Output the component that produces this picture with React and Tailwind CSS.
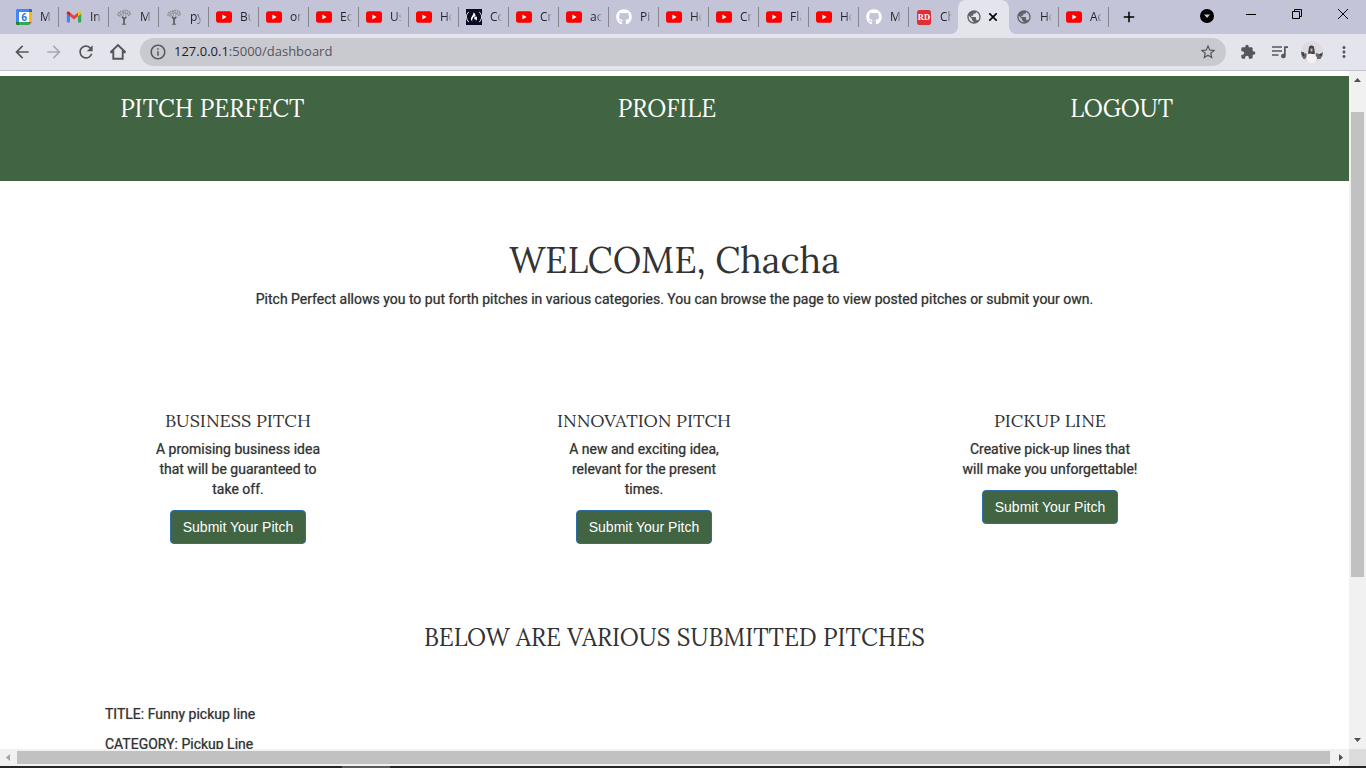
import React from "react";
import {
  MdArrowBack, MdArrowForward, MdRefresh, MdInfoOutline, MdStarBorder,
  MdExtension, MdMoreVert, MdPublic, MdAdd,
} from "react-icons/md";
import { FaGithub, FaFreeCodeCamp } from "react-icons/fa";

function YouTubeIcon() {
  return (
    <svg viewBox="0 0 16 16" className="size-4" aria-hidden="true">
      <rect x="0" y="2.3" width="16" height="11.4" rx="2.8" fill="#ff0000" />
      <path d="M6.4 5.6 10.5 8l-4.1 2.4z" fill="#fff" />
    </svg>
  );
}

function CalendarIcon() {
  return (
    <svg viewBox="0 0 16 16" className="size-4" aria-hidden="true">
      <path d="M1.3 0h11.7v3H3v10H0V1.3A1.3 1.3 0 0 1 1.3 0z" fill="#4285f4" />
      <path d="M13 0h1.7A1.3 1.3 0 0 1 16 1.3V3h-3z" fill="#1967d2" />
      <path d="M13 3h3v10h-3z" fill="#fbbc04" />
      <path d="M3 13h10v3H3z" fill="#34a853" />
      <path d="M0 13h3v3H1.3A1.3 1.3 0 0 1 0 14.7z" fill="#188038" />
      <path d="M13 13h3l-3 3z" fill="#ea4335" />
      <path d="M3 3h10v10H3z" fill="#fff" />
      <text x="8" y="11.500" textAnchor="middle" fontSize="10" fontWeight="700" fontFamily="Roboto, sans-serif" fill="#1a73e8">6</text>
    </svg>
  );
}

function GmailIcon() {
  return (
    <svg viewBox="0 0 16 16" className="size-4" aria-hidden="true">
      <path d="M1.800 13.5h2.2V7.200L.8 4.500v7.900A1.100 1.100 0 0 0 1.800 13.500z" fill="#4285f4" />
      <path d="M12 13.500h2.200a1.100 1.100 0 0 0 1-1.100V4.500L12 7.200z" fill="#34a853" />
      <path d="M12 3.600v3.600l3.200-2.700V4c0-1.500-1.400-1.900-2.300-1.200z" fill="#fbbc04" />
      <path d="M4 7.200V3.600L8 6.700l4-3.100v3.600L8 10.400z" fill="#ea4335" />
      <path d="M.8 4v.5L4 7.200V3.600l-.9-.8C2.200 2.100.8 2.500.8 4z" fill="#c5221f" />
    </svg>
  );
}

function TreeIcon() {
  return (
    <svg viewBox="0 0 16 16" className="size-4" aria-hidden="true">
      <g fill="none" stroke="#8d8d90" strokeWidth="1.800" strokeDasharray="1.400 0.800">
        <path d="M2 6.500C2 5 3 3 5 2.500S10 .8 12 2s2.300 3 2.200 4.500" />
        <path d="M3.500 7.500C4 6 5 4.500 7 4s4.500 0 6 3" />
        <path d="M4.500 5.500 7.500 8M7.500 2v5M11 3.500 9 7" strokeWidth="1" />
      </g>
      <path d="M8 15.500V9M8 10 6 7.800M8.200 10 10.300 7.800" stroke="#55555a" strokeWidth="1.600" fill="none" />
      <path d="M6 15.300h4.200" stroke="#68686d" strokeWidth="0.900" />
    </svg>
  );
}

function RdIcon() {
  return (
    <svg viewBox="0 0 16 16" className="size-4" aria-hidden="true">
      <rect x="1" y="1" width="14" height="15" rx="2.500" fill="#df2f36" />
      <text x="8" y="11.300" textAnchor="middle" fontSize="8.500" fontWeight="700" fontFamily="Liberation Serif, serif" fill="#fff">RD</text>
    </svg>
  );
}

function CodeCampIcon() {
  return (
    <span className="flex size-4 items-center justify-center bg-[#0a0a23] text-white">
      <FaFreeCodeCamp className="size-4" />
    </span>
  );
}

const ICONS = {
  calendar: <CalendarIcon />,
  gmail: <GmailIcon />,
  tree: <TreeIcon />,
  youtube: <YouTubeIcon />,
  camp: <CodeCampIcon />,
  github: <FaGithub className="size-4 text-white" />,
  rd: <RdIcon />,
  globe: <MdPublic className="size-4 text-[#5f6368]" />,
};

const TABS = [
  ["calendar", "M"], ["gmail", "In"], ["tree", "M"], ["tree", "py"], ["youtube", "Bu"],
  ["youtube", "or"], ["youtube", "Ec"], ["youtube", "Us"], ["youtube", "Ho"], ["camp", "Co"],
  ["youtube", "Cr"], ["youtube", "ac"], ["github", "Pi"], ["youtube", "Ho"], ["youtube", "Cr"],
  ["youtube", "Fla"], ["youtube", "Ho"], ["github", "M"], ["rd", "Ch"],
];

function Tab({ icon, label, divider = true }) {
  return (
    <button
      role="tab"
      aria-selected="false"
      className={`flex h-5 w-[50px] shrink-0 items-center gap-2 overflow-hidden border-r pl-[7px] ${divider ? "border-[#85858f]" : "border-transparent"}`}
    >
      <span className="shrink-0">{icon}</span>
      <span className="w-3 shrink-0 overflow-hidden text-left text-xs whitespace-nowrap text-[#25252b] [mask-image:linear-gradient(to_right,black_50%,transparent)]">
        {label}
      </span>
    </button>
  );
}

function TabStrip() {
  return (
    <header className="flex h-[34px] shrink-0 bg-[#c4c4d8]">
      <div role="tablist" className="flex items-center pl-[9px]">
        {TABS.map(([icon, label], i) => (
          <Tab key={i} icon={ICONS[icon]} label={label} divider={i < TABS.length - 1} />
        ))}
        <div
          role="tab"
          aria-selected="true"
          className="relative -ml-px flex h-full w-[51px] shrink-0 items-center gap-[3px] rounded-t-lg bg-[#e4e4ed] pl-2 before:absolute before:bottom-0 before:-left-2 before:size-2 before:bg-[radial-gradient(circle_at_top_left,transparent_8px,#e4e4ed_8px)] after:absolute after:-right-2 after:bottom-0 after:size-2 after:bg-[radial-gradient(circle_at_top_right,transparent_8px,#e4e4ed_8px)]"
        >
          {ICONS.globe}
          <button aria-label="Close tab" className="flex size-4 items-center justify-center">
            <svg viewBox="0 0 8 8" className="size-2" stroke="#000" strokeWidth="1.700"><path d="M.3.3l7.400 7.400M7.700.3.3 7.700" /></svg>
          </button>
        </div>
        <Tab icon={ICONS.globe} label="Ho" />
        <Tab icon={ICONS.youtube} label="Ac" />
      </div>
      <button aria-label="New tab" className="flex w-10 items-center justify-center text-black">
        <MdAdd className="size-[18px]" />
      </button>
      <div className="ml-auto flex h-8 text-black">
        <button aria-label="Search tabs" className="flex w-[42px] items-center justify-center">
          <svg viewBox="0 0 14 14" className="size-[14px]"><circle cx="7" cy="7" r="7" /><path d="M4 5.500h6L7 9z" fill="#c4c4d8" /></svg>
        </button>
        <button aria-label="Minimize" className="flex w-[46px] items-center justify-center pb-1">
          <svg viewBox="0 0 10 10" className="size-[10px]"><path d="M0 5.500h10" stroke="#000" /></svg>
        </button>
        <button aria-label="Restore" className="flex w-[46px] items-center justify-center pb-1">
          <svg viewBox="0 0 10 10" className="size-[10px]" fill="none" stroke="#000"><path d="M.5 2.500h7v7h-7zM2.500 2.500v-2h7v7h-2" /></svg>
        </button>
        <button aria-label="Close" className="flex w-[46px] items-center justify-center pb-1">
          <svg viewBox="0 0 10 10" className="size-[10px]" stroke="#000"><path d="M0 0l10 10M10 0 0 10" /></svg>
        </button>
      </div>
    </header>
  );
}

function ToolButton({ label, children }) {
  return (
    <button aria-label={label} className="flex h-8 w-8 shrink-0 items-center justify-center text-[#55565c]">
      {children}
    </button>
  );
}

function HomeIcon() {
  return (
    <svg viewBox="0 0 20 20" className="size-5" fill="none" stroke="currentColor" strokeWidth="1.900">
      <path d="M2.600 10.200 10 3l7.400 7.200M5.300 8.500v8.300h9.400V8.500M2.300 10.200h3M14.700 10.200h3" />
    </svg>
  );
}

function PlaylistIcon() {
  return (
    <svg viewBox="0 0 20 20" className="size-5">
      <path d="M2 5h10M2 9h10M2 13h6.500" fill="none" stroke="currentColor" strokeWidth="1.600" />
      <path d="M14 4.200h4v1.700h-2.300V14a2.300 2.300 0 1 1-1.700-2.200z" fill="currentColor" />
    </svg>
  );
}

function Avatar() {
  return (
    <svg viewBox="0 0 22 22" className="size-[22px]">
      <clipPath id="avatar"><circle cx="11" cy="11" r="11" /></clipPath>
      <g clipPath="url(#avatar)">
        <path d="M0 0h22v22H0z" fill="#dedade" />
        <path d="M0 10.500c1.500 0 2 1.500 3 2l2-.5 1 3-2 3H0zM15 12l2 .5 1.500 1L22 11v7h-6l-1.500-2z" fill="#6a686d" />
        <path d="M1 11h1.500l1 4H2zM17.500 14l3-2v3z" fill="#353338" />
        <path d="M8 6c1-2 4-2 5 0l1 6.500-3 1.500-4-1.500z" fill="#454348" />
        <path d="M9.500 7.500h2v3h-2z" fill="#c6b9ba" />
        <path d="M5.500 14.500l3.500-2 4.500 1 2.500 3-2 6H7z" fill="#f4f2f4" />
      </g>
    </svg>
  );
}

function Toolbar() {
  return (
    <div className="flex h-[37px] shrink-0 items-center border-b border-[#c3c3cb] bg-[#e4e4ed] pl-[6px]">
      <ToolButton label="Back"><MdArrowBack className="size-5" /></ToolButton>
      <ToolButton label="Forward"><MdArrowForward className="size-5 text-[#a9a9b1]" /></ToolButton>
      <ToolButton label="Reload"><MdRefresh className="size-5" /></ToolButton>
      <ToolButton label="Home"><HomeIcon /></ToolButton>
      <div className="ml-[6px] flex h-7 min-w-0 flex-1 items-center gap-[7px] rounded-full bg-[#c9c9d0] px-[9px] text-[#55565c]">
        <MdInfoOutline className="size-[18px] shrink-0" />
        <a href="#address" aria-label="Address" className="flex-1 truncate text-[13px] text-[#55565c]">
          <span className="text-[#202124]">127.0.0.1</span>:5000/dashboard
        </a>
        <button aria-label="Bookmark this page"><MdStarBorder className="size-[18px]" /></button>
      </div>
      <div className="flex pr-[6px] pl-[6px]">
        <ToolButton label="Extensions"><MdExtension className="size-4" /></ToolButton>
        <ToolButton label="Media"><PlaylistIcon /></ToolButton>
        <ToolButton label="Profile"><Avatar /></ToolButton>
        <ToolButton label="Menu"><MdMoreVert className="size-[18px]" /></ToolButton>
      </div>
    </div>
  );
}

const CARDS = [
  { title: "BUSINESS PITCH", text: "A promising business idea that will be guaranteed to take off." },
  { title: "INNOVATION PITCH", text: "A new and exciting idea, relevant for the present times." },
  { title: "PICKUP LINE", text: "Creative pick-up lines that will make you unforgettable!" },
];

function Dashboard() {
  return (
    <main className="min-w-0 flex-1 overflow-hidden bg-white pt-[5px] font-[Roboto,sans-serif] text-sm leading-5 font-normal text-[#333333]">
      <nav className="h-[105px] bg-[#416442] pt-[19px]">
        <div className="-ml-[15px] grid grid-cols-3 text-center font-[Lora,'Liberation_Serif',serif] text-2xl leading-7 text-white">
          <a href="#home">PITCH PERFECT</a>
          <a href="#profile">PROFILE</a>
          <a href="#logout">LOGOUT</a>
        </div>
      </nav>
      <section className="pt-[59px] text-center">
        <h1 className="font-[Lora,'Liberation_Serif',serif] text-4xl leading-10">WELCOME, Chacha</h1>
        <p className="mt-[9px] [text-shadow:0_0_1px_#33333399]">Pitch Perfect allows you to put forth pitches in various categories. You can browse the page to view posted pitches or submit your own.</p>
      </section>
      <section className="mt-[102px] grid grid-cols-3 pr-24 pl-[35px] text-center">
        {CARDS.map((card) => (
          <article key={card.title} className="flex flex-col items-center">
            <h2 className="font-[Lora,'Liberation_Serif',serif] text-lg leading-5">{card.title}</h2>
            <p className="mt-2 w-[180px] [text-shadow:0_0_1px_#33333399]">{card.text}</p>
            <button className="mt-[11px] h-[34px] rounded border border-[#2e6da4] bg-[#416442] px-3 font-['Liberation_Sans',Arial,sans-serif] text-white">
              Submit Your Pitch
            </button>
          </article>
        ))}
      </section>
      <section className="mt-20">
        <h2 className="text-center font-[Lora,'Liberation_Serif',serif] text-2xl leading-7">BELOW ARE VARIOUS SUBMITTED PITCHES</h2>
        <div className="mt-[52px] flex flex-col gap-[10px] pl-[105px] [text-shadow:0_0_1px_#33333399]">
          <p>TITLE: Funny pickup line</p>
          <p>CATEGORY: Pickup Line</p>
        </div>
      </section>
    </main>
  );
}

function Arrow({ d, color = "#505050" }) {
  return (
    <svg viewBox="0 0 17 17" className="size-[17px] shrink-0" aria-hidden="true"><path d={d} fill={color} /></svg>
  );
}

export default function App() {
  return (
    <div className="flex h-screen flex-col overflow-hidden font-['Open_Sans','Noto_Sans',sans-serif]">
      <TabStrip />
      <Toolbar />
      <div className="flex min-h-0 flex-1">
        <Dashboard />
        <div className="flex w-[17px] shrink-0 flex-col bg-[#f1f1f1]">
          <Arrow d="M5 11h7L8.500 7z" />
          <div className="flex min-h-0 flex-1 flex-col px-[2px] pt-6">
            <div className="h-3/4 bg-[#c1c1c1]" />
          </div>
          <Arrow d="M5 6h7l-3.500 4z" />
        </div>
      </div>
      <div className="flex h-[17px] shrink-0 bg-[#f1f1f1]">
        <Arrow d="M10 5v7L6 8.500z" color="#a3a3a3" />
        <div className="flex flex-1 py-[2px] pr-[2px]"><div className="flex-1 bg-[#c1c1c1]" /></div>
        <Arrow d="M7 5v7l4-3.500z" />
        <div className="w-[17px] bg-[#dcdcdc]" />
      </div>
      <div className="flex h-[2px] shrink-0 bg-[#252525] pl-[342px]"><div className="w-12 bg-[#5a5a5a]" /></div>
    </div>
  );
}
